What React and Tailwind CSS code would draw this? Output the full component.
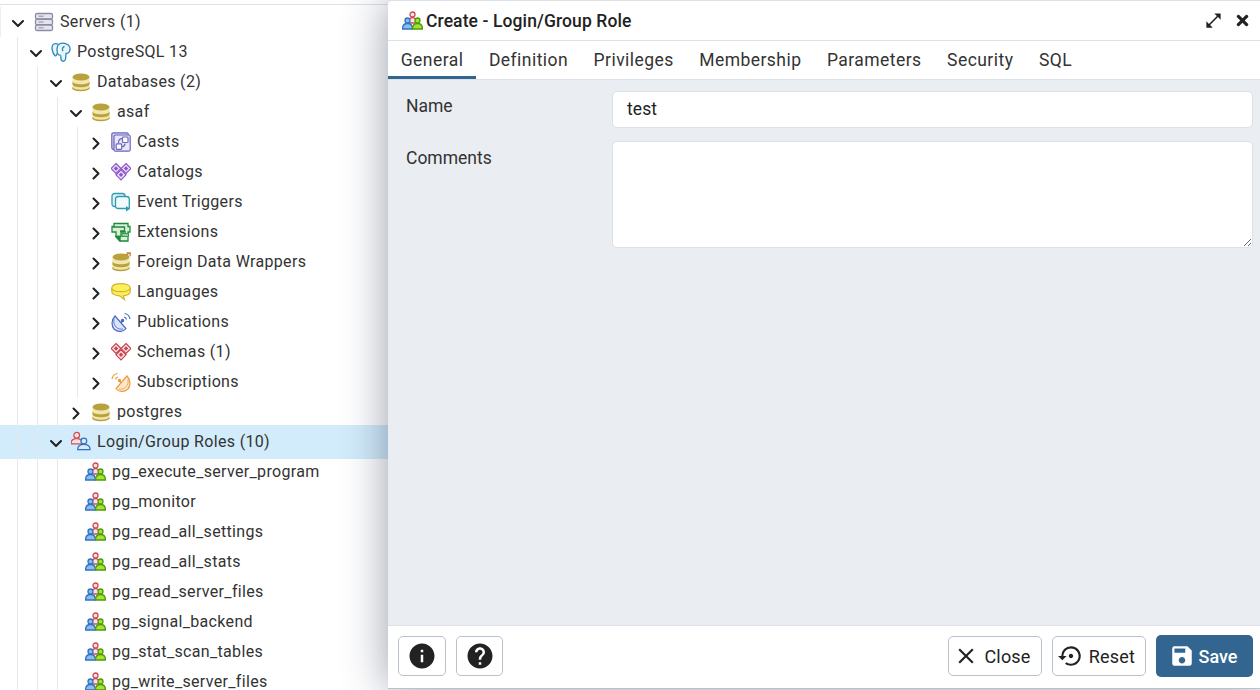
import { ChevronDown, ChevronRight } from 'lucide-react';
import { FaTimes } from 'react-icons/fa';
import { MdClose, MdHelp, MdInfo, MdOpenInFull, MdSave, MdSettingsBackupRestore } from 'react-icons/md';

function ServerIcon() {
    return (
        <svg viewBox="0 0 20 20" className="h-5 w-5">
            {[1.500, 7.300, 13.100].map((y) => (
                <g key={y}>
                    <rect x="1.500" y={y} width="17" height="5.400" rx="1.500" fill="#e4e4ee" stroke="#8c8ca3" strokeWidth="1.300" />
                    <path d={`M4.500 ${y + 2.700}h5`} stroke="#8c8ca3" strokeWidth="1" />
                </g>
            ))}
        </svg>
    );
}

function ElephantIcon() {
    return (
        <svg viewBox="0 0 20 20" className="h-5 w-5" fill="#e6f4fc" stroke="#2f86b8" strokeWidth="1.300" strokeLinejoin="round">
            <path d="M7.500 2.500C4 .5.800 2 1 6c.2 2.800 1.300 6 2.800 7.500 1 .9 1.800-.3 2.200-2" />
            <path d="M7.500 2.500c2.500-1.500 6.500-1.800 9.500.3 2.200 1.700 2.400 4.700 1.300 7-.6 1.200-1.900 1.800-3.300 1.700l-.3 4.500c-.2 2.700-2 3.700-3.500 3-1.500-.6-1.500-2.800-1.400-5.500" />
            <path d="M7.500 2.500C6 5 5.600 8.500 6.700 11.500c.6 1.400 1.700 2 3.100 1.500M13.500 4.500c-2 .4-2.700 2.800-1.500 4.700" fill="none" />
        </svg>
    );
}

function DbIcon({ arrow }) {
    return (
        <svg viewBox="0 0 20 20" className="h-5 w-5">
            <path d="M1.500 5v10.500c0 1.700 3.800 3 8.500 3s8.500-1.300 8.500-3V5z" fill="#f0e6ae" />
            <path d="M1.500 9.300c0 1.700 3.800 3 8.500 3s8.500-1.300 8.500-3v3c0 1.700-3.800 3-8.500 3s-8.500-1.300-8.500-3z" fill="#b9a23e" />
            <path d="M1.500 15.500c0 1.700 3.800 3 8.500 3s8.500-1.300 8.500-3" fill="none" stroke="#b9a23e" strokeWidth="1.300" />
            <ellipse cx="10" cy="5" rx="8.500" ry="3.500" fill="#b9a23e" />
            {arrow && <path d="M14 3.500l4.500-2.300m-3-.4h3.700v3.400" fill="none" stroke="#c98a2b" strokeWidth="1.300" />}
        </svg>
    );
}

function CastIcon() {
    return (
        <svg viewBox="0 0 20 20" className="h-5 w-5" fill="none" stroke="#6d66bd" strokeWidth="1.200">
            <rect x=".8" y=".8" width="16.500" height="16.500" rx="1.500" fill="#d4d2f2" />
            <rect x="3" y="3" width="16.200" height="16.200" rx="1.500" fill="#e8e7fa" />
            <rect x="11.500" y="5" width="5.500" height="5.500" rx=".8" fill="#fff" />
            <rect x="5.200" y="11.800" width="5.500" height="5.500" rx=".8" fill="#fff" />
            <path d="M7.500 11c0-3 1-4.300 3.500-4.300M14 11.500c0 2-.8 3-2.800 3.300" />
        </svg>
    );
}

function DiamondGrid({ stroke, fill }) {
    const cells = [[5, 6.500], [15, 6.500], [10, 12.800]];
    return (
        <svg viewBox="0 0 20 20" className="h-5 w-5">
            {cells.map(([x, y]) => (
                <g key={`${x}-${y}`}>
                    <path d={`M${x} ${y - 5}l5 5-5 5-5-5z`} fill={fill} stroke={stroke} strokeWidth="1.200" />
                    <path d={`M${x} ${y - 2.200}l2.200 2.200-2.200 2.200-2.200-2.200z`} fill={stroke} />
                </g>
            ))}
        </svg>
    );
}

function TriggerIcon() {
    return (
        <svg viewBox="0 0 20 20" className="h-5 w-5" fill="none" stroke="#2f9cb0" strokeWidth="1.300">
            <rect x="1" y="1.500" width="13" height="13" rx="2.500" fill="#dff3f6" />
            <path d="M4.500 7.500c0-2 1-3 2.800-3h8.200c1.800 0 2.800 1 2.800 2.800v9.200H7.300c-1.800 0-2.800-1-2.800-2.800z" fill="#f1fbfc" />
            <path d="M15 14l4 2.700-4 2.800z" fill="#2f9cb0" stroke="none" />
        </svg>
    );
}

function ExtensionIcon() {
    return (
        <svg viewBox="0 0 20 20" className="h-5 w-5" stroke="#1f8a3b" strokeWidth="1.300">
            <path d="M3 1.500h14v3h2v5.500h-2V19H9l-4-4v-5H1V4.500h2z" fill="#d7f0d8" />
            <path d="M1.500 5h12v4H9M15 10h-5v4.500H5.500" fill="none" />
            <path d="M9 19v-4.500H5z" fill="#1f8a3b" />
            <path d="M11 11.500h6.500v3H11z" fill="#8fd09a" strokeWidth=".8" />
        </svg>
    );
}

function LanguageIcon() {
    return (
        <svg viewBox="0 0 20 20" className="h-5 w-5" fill="#fbee5f" stroke="#d5b528" strokeWidth="1.200">
            <path d="M.8 6c0-2.800 4.200-4.300 9.200-4.300s9.200 1.500 9.200 4.300v3.500c0 2.700-3.500 4-7 4.300l1.300 3.700-5-3.700c-4-.3-7.700-1.500-7.700-4.300z" />
            <path d="M.8 6c0 2.400 4.200 3.700 9.200 3.700s9.200-1.300 9.200-3.700" fill="none" />
        </svg>
    );
}

function DishIcon({ stroke, fill, flip }) {
    return (
        <svg viewBox="0 0 20 20" className={`h-5 w-5 ${flip ? '-scale-x-100' : ''}`} fill="none" stroke={stroke} strokeWidth="1.200">
            <path d="M4 4C.3 8 .3 14 3 17c4 3.500 9.500 3 12-.500z" fill={fill} />
            <path d="M3 7c-.5 3 0 6 2 8s5 2.500 7 2" strokeWidth=".8" />
            <path d="M10 11l1.500-2" />
            <circle cx="11.500" cy="8.500" r="1.100" fill={stroke} />
            <path d="M13 5c1.400.3 2.200 1.100 2.500 2.500M13.500 1.500c3 .5 5 2.500 5.500 5.500" />
        </svg>
    );
}

function Person({ x, y, stroke, fill, r = 2.800, w = 5 }) {
    return (
        <g stroke={stroke} strokeWidth="1.300" fill={fill}>
            <path d={`M${x - w} ${y + r + 6}c0-3.500 2-5.500 ${w}-5.500s${w} 2 ${w} 5.500z`} />
            <circle cx={x} cy={y} r={r} />
        </g>
    );
}

function LoginIcon() {
    return (
        <svg viewBox="0 0 21 20" className="h-5 w-[21px]">
            <Person x={6} y={4} r={3} w={6} stroke="#cf4b55" fill="#fbe3e4" />
            <Person x={13.500} y={10} r={3} w={6.500} stroke="#2f73c0" fill="#dcebfb" />
        </svg>
    );
}

function GroupIcon() {
    return (
        <svg viewBox="0 0 21 20" className="h-5 w-[21px]">
            <Person x={10.500} y={3.500} r={2.500} w={4} stroke="#cf4b55" fill="#fbe3e4" />
            <Person x={5.500} y={9.500} r={2.500} w={5} stroke="#2f73c0" fill="#8cbcf0" />
            <Person x={15.500} y={9.500} r={2.500} w={5} stroke="#4e9a12" fill="#a6e22e" />
        </svg>
    );
}

const rows = [
    { depth: 0, open: true, icon: <ServerIcon />, label: 'Servers (1)', first: true },
    { depth: 1, open: true, icon: <ElephantIcon />, label: 'PostgreSQL 13' },
    { depth: 2, open: true, icon: <DbIcon />, label: 'Databases (2)' },
    { depth: 3, open: true, icon: <DbIcon />, label: 'asaf' },
    { depth: 4, icon: <CastIcon />, label: 'Casts' },
    { depth: 4, icon: <DiamondGrid stroke="#8d55c9" fill="#eadcf8" />, label: 'Catalogs' },
    { depth: 4, icon: <TriggerIcon />, label: 'Event Triggers' },
    { depth: 4, icon: <ExtensionIcon />, label: 'Extensions' },
    { depth: 4, icon: <DbIcon arrow />, label: 'Foreign Data Wrappers' },
    { depth: 4, icon: <LanguageIcon />, label: 'Languages' },
    { depth: 4, icon: <DishIcon stroke="#4a68c0" fill="#dbe3f8" />, label: 'Publications' },
    { depth: 4, icon: <DiamondGrid stroke="#c9424c" fill="#fbe3e4" />, label: 'Schemas (1)' },
    { depth: 4, icon: <DishIcon stroke="#ee9a3c" fill="#fde8cc" flip />, label: 'Subscriptions' },
    { depth: 3, icon: <DbIcon />, label: 'postgres' },
    { depth: 2, open: true, icon: <LoginIcon />, label: 'Login/Group Roles (10)', selected: true },
];

const roles = [
    'pg_execute_server_program',
    'pg_monitor',
    'pg_read_all_settings',
    'pg_read_all_stats',
    'pg_read_server_files',
    'pg_signal_backend',
    'pg_stat_scan_tables',
    'pg_write_server_files',
];

const tabs = ['General', 'Definition', 'Privileges', 'Membership', 'Parameters', 'Security', 'SQL'];

function Guides({ count }) {
    return (
        <div className="ml-[17px] flex self-stretch">
            {Array.from({ length: count }).map((_, i) => (
                <span key={i} className="w-5 border-l border-[#e6e8ee]" />
            ))}
        </div>
    );
}

function TreeRow({ row }) {
    const height = row.selected ? '-my-[2px] h-[34px] bg-[#d2ecfb]' : 'h-[30px]';
    return (
        <div className={`flex items-center ${height} ${row.first ? 'shadow-[inset_1px_0_0_#eceef2]' : ''}`}>
            <Guides count={row.depth} />
            <span className={`flex w-5 translate-y-[1.5px] justify-center text-[#222] ${row.first ? '-ml-[9px]' : '-ml-[11px]'}`}>
                {row.open ? <ChevronDown size={20} strokeWidth={2.5} /> : <ChevronRight size={20} strokeWidth={2.5} />}
            </span>
            <span className={`mr-[6px] flex w-5 justify-center ${row.first ? 'ml-[6px]' : 'ml-[5px]'} ${row.selected ? 'pb-[2px]' : ''}`}>{row.icon}</span>
            <span className="whitespace-nowrap text-[16px] tracking-[0.33px] text-[#333]">{row.label}</span>
        </div>
    );
}

function FooterButton({ children, className = '' }) {
    return (
        <button className={`flex h-10 items-center justify-center rounded-[5px] border border-[#bac1cd] bg-white text-[18px] tracking-[0.2px] text-[#222] ${className}`}>
            {children}
        </button>
    );
}

export default function App() {
    return (
        <div className="relative h-[690px] w-[1260px] overflow-hidden bg-white font-['Roboto',sans-serif]">
            <div className="h-[5px] border-b border-[#dde0e6]" />
            <div className="h-[2px]" />
            {rows.map((row) => (
                <TreeRow key={row.label} row={row} />
            ))}
            {roles.map((role) => (
                <div key={role} className="flex h-[30px] items-center">
                    <Guides count={3} />
                    <span className="ml-2 mr-[6px] flex w-[21px]">
                        <GroupIcon />
                    </span>
                    <span className="whitespace-nowrap text-[16px] tracking-[0.33px] text-[#333]">{role}</span>
                </div>
            ))}

            {/* dialog sits over the tree */}
            <div className="absolute left-[388px] top-0 flex h-[689px] w-[872px] flex-col rounded-tl-[4px] border-t border-b border-t-[#dde0e6] border-b-[#bac1cd] bg-white shadow-[0_0_45px_rgba(40,50,80,0.48)]">
                <div className="flex h-10 shrink-0 items-center border-b border-[#dde0e6] pl-[14px] pr-[9px]">
                    <GroupIcon />
                    <span className="ml-[3px] pt-px text-[17.5px] font-medium tracking-[0.1px] text-[#222]">Create - Login/Group Role</span>
                    <span className="ml-auto flex items-center gap-[11px] text-[#222]">
                        <MdOpenInFull size={19} />
                        <FaTimes size={17} />
                    </span>
                </div>
                <div className="flex h-[39px] shrink-0 border-b border-[#dde0e6]">
                    {tabs.map((tab, i) => (
                        <div
                            key={tab}
                            className={`flex items-center px-[12.75px] text-[17.5px] tracking-[0.45px] text-[#333] ${i === 0 ? 'border-b-[3px] border-[#326690] pt-[3px]' : ''}`}
                        >
                            {tab}
                        </div>
                    ))}
                </div>
                <div className="grid flex-1 grid-cols-[206px_641px] content-start gap-y-[13px] bg-[#eaedf2] pl-[18px] pt-[11px]">
                    <label className="pt-[2px] text-[17.5px] text-[#333]">Name</label>
                    <div className="flex h-[37px] items-center rounded-[5px] border border-[#dde0e6] bg-white px-[14px] text-[17.5px] tracking-[0.1px] text-[#222]">
                        test
                    </div>
                    <label className="pt-1 text-[17.5px] text-[#333]">Comments</label>
                    <textarea className="h-[107px] rounded-[5px] border border-[#dde0e6] bg-white outline-none" />
                </div>
                <div className="flex h-[63px] shrink-0 items-center border-t border-[#dde0e6] pb-[2px] pl-[10px] pr-[7px]">
                    <FooterButton className="w-12">
                        <MdInfo size={30} />
                    </FooterButton>
                    <FooterButton className="ml-[10px] w-[47px]">
                        <MdHelp size={30} />
                    </FooterButton>
                    <FooterButton className="ml-auto w-[94px] gap-[5px] pr-[6px]">
                        <MdClose size={26} />
                        Close
                    </FooterButton>
                    <FooterButton className="ml-[10px] w-[94px] gap-[5px] pr-[5px]">
                        <MdSettingsBackupRestore size={26} />
                        Reset
                    </FooterButton>
                    <button className="ml-[10px] flex h-[42px] w-[97px] items-center justify-center gap-[4px] rounded-[5px] bg-[#326690] pr-[3px] text-[18px] font-medium text-white">
                        <MdSave size={26} />
                        Save
                    </button>
                </div>
            </div>
        </div>
    );
}
